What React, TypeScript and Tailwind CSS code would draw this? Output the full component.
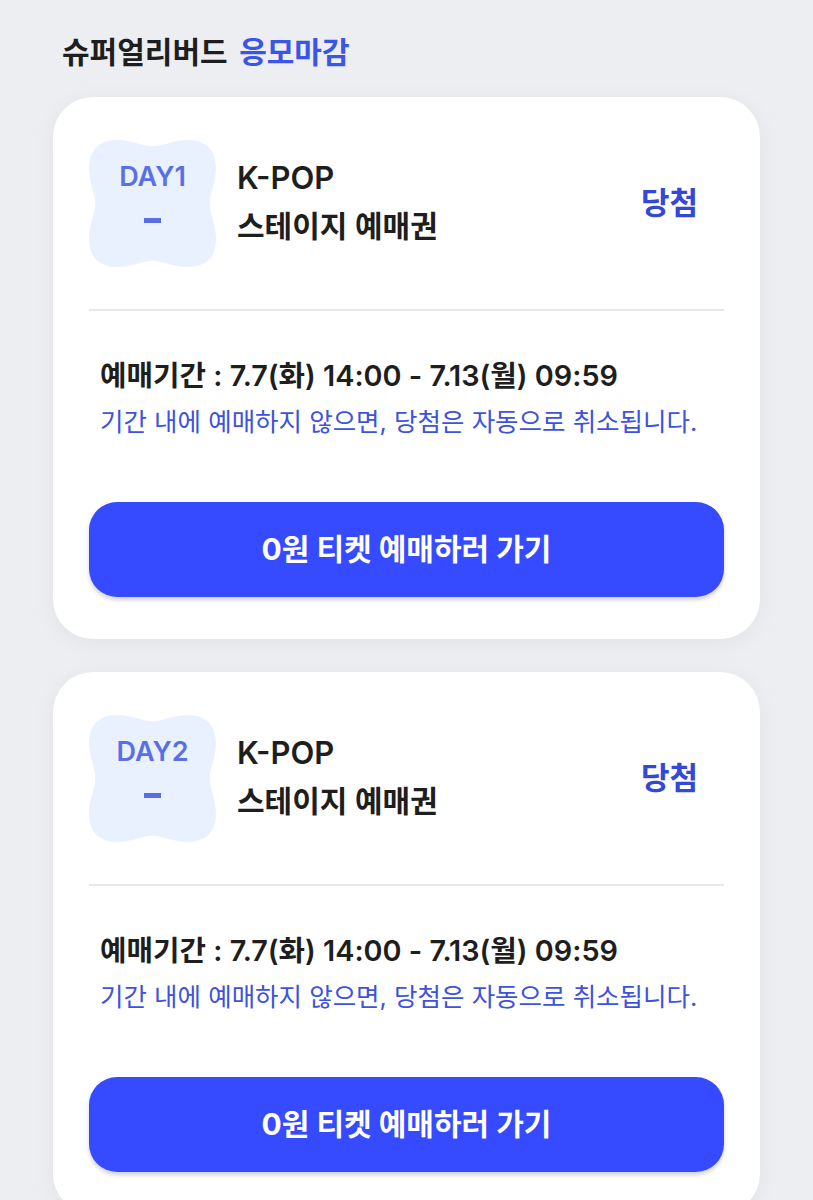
type Ticket = {
  day: string
  title: string
  subtitle: string
  status: string
  period: string
  notice: string
  cta: string
}

const tickets: Ticket[] = [
  {
    day: "DAY1",
    title: "K-POP",
    subtitle: "스테이지 예매권",
    status: "당첨",
    period: "예매기간 : 7.7(화) 14:00 - 7.13(월) 09:59",
    notice: "기간 내에 예매하지 않으면, 당첨은 자동으로 취소됩니다.",
    cta: "0원 티켓 예매하러 가기",
  },
  {
    day: "DAY2",
    title: "K-POP",
    subtitle: "스테이지 예매권",
    status: "당첨",
    period: "예매기간 : 7.7(화) 14:00 - 7.13(월) 09:59",
    notice: "기간 내에 예매하지 않으면, 당첨은 자동으로 취소됩니다.",
    cta: "0원 티켓 예매하러 가기",
  },
]

function DayBadge({ day }: { day: string }) {
  return (
    <div className="relative h-[127px] w-[127px] shrink-0">
      <svg viewBox="0 0 100 100" className="absolute inset-0 h-full w-full">
        <path
          d="M50 5 C58 5 66 0 78 0 C92 0 100 8 100 22 C100 34 95 42 95 50 C95 58 100 66 100 78 C100 92 92 100 78 100 C66 100 58 95 50 95 C42 95 34 100 22 100 C8 100 0 92 0 78 C0 66 5 58 5 50 C5 42 0 34 0 22 C0 8 8 0 22 0 C34 0 42 5 50 5 Z"
          fill="#eaf1fe"
        />
      </svg>
      <div className="relative flex h-full flex-col items-center pt-[23px]">
        <span className="text-[27px] font-semibold leading-[28px] text-[#5a6fe4]">{day}</span>
        <span className="mt-[27px] h-[5px] w-[17px] bg-[#5a6fe4]" />
      </div>
    </div>
  )
}

function TicketCard({ ticket }: { ticket: Ticket }) {
  return (
    <div className="rounded-[40px] bg-white px-9 pb-[42px] pt-[43px] shadow-[0_4px_24px_rgba(0,0,0,0.05)]">
      <div className="flex items-center">
        <DayBadge day={ticket.day} />
        <div className="ml-[21px] flex flex-1 flex-col pb-[4px]">
          <p className="text-[31px] font-semibold leading-[48px] text-[#1e1e1e]">{ticket.title}</p>
          <p className="text-[30px] font-semibold leading-[48px] text-[#1e1e1e]">{ticket.subtitle}</p>
        </div>
        <span className="mr-[26px] text-[31px] font-bold text-[#3448d8]">{ticket.status}</span>
      </div>

      <div className="mt-[42px] h-[2px] bg-[#e7e7e9]" />

      <div className="mt-[48px] pl-[11px]">
        <p className="text-[28.8px] font-semibold leading-[34px] text-[#1e1e1e]">{ticket.period}</p>
        <p className="mt-[13px] text-[25.5px] leading-[32px] text-[#3d52de]">{ticket.notice}</p>
      </div>

      <button className="mt-[64px] flex h-[95px] w-full items-center justify-center rounded-[28px] bg-[#364bff] text-[30px] font-bold text-white shadow-[0_3px_4px_rgba(0,0,0,0.18)]">
        {ticket.cta}
      </button>
    </div>
  )
}

export default function App() {
  return (
    <div className="min-h-screen bg-[#edeef2] px-[53px] pt-[32px] pb-10 font-['Inter','Noto_Sans_CJK_KR',sans-serif]">
      <h1 className="ml-[9px] text-[30px] font-semibold leading-[40px] text-[#1e1e1e]">
        슈퍼얼리버드 <span className="ml-[4px] text-[#3b55e6]">응모마감</span>
      </h1>

      <div className="mt-[25px] flex flex-col gap-[33px]">
        {tickets.map((ticket) => (
          <TicketCard key={ticket.day} ticket={ticket} />
        ))}
      </div>
    </div>
  )
}
